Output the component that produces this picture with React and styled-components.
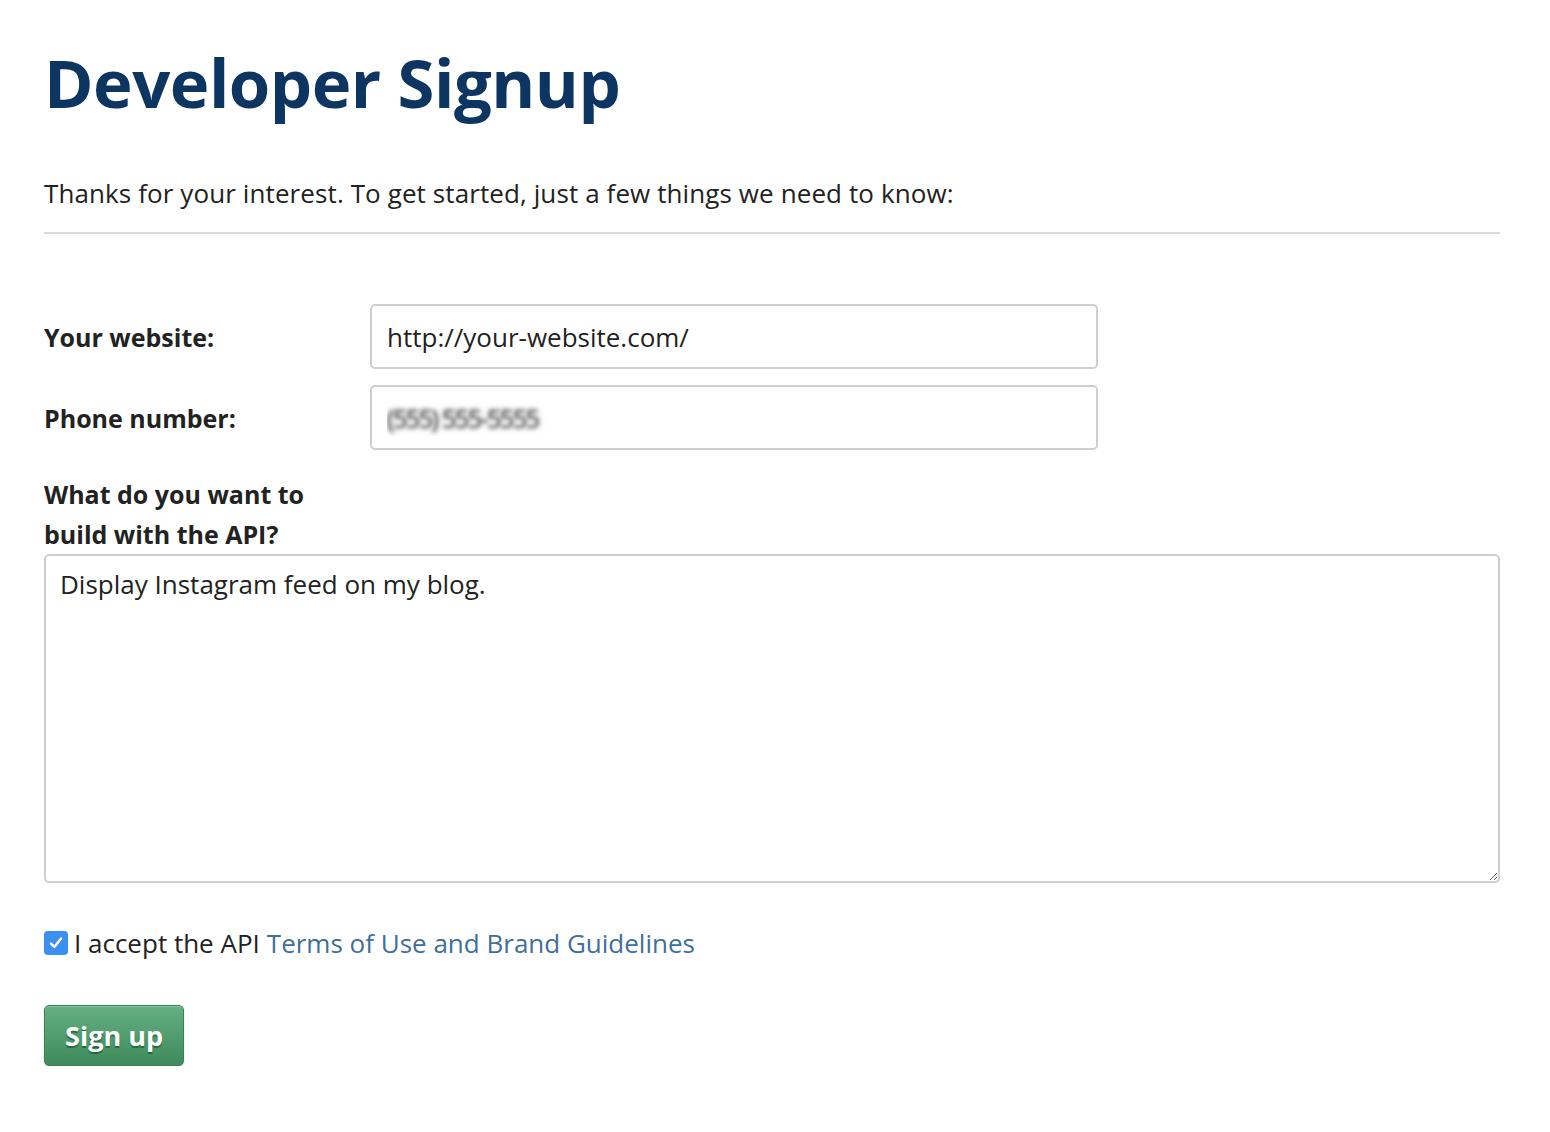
import React from "react";
import styled, { createGlobalStyle } from "styled-components";

const GlobalStyle = createGlobalStyle`
  body {
    margin: 0;
    background: #fff;
    font-family: "Open Sans", "Lato", sans-serif;
    color: #222;
  }
  * { box-sizing: border-box; }
`;

const Page = styled.div`
  width: 1456px;
  margin-left: 44px;
  padding-top: 40px;
`;

const Title = styled.h1`
  margin: 0;
  font-weight: 700;
  font-size: 67px;
  line-height: 84px;
  letter-spacing: -0.5px;
  color: #0c3661;
`;

const Intro = styled.p`
  margin: 53px 0 0;
  font-size: 26px;
  line-height: 32px;
  letter-spacing: 0.1px;
  color: #222;
`;

const Rule = styled.hr`
  margin: 23px 0 0;
  border: none;
  border-top: 2px solid #dcdcdc;
`;

const Form = styled.form`
  margin-top: 70px;
  display: flex;
  flex-direction: column;
`;

const Row = styled.div`
  display: flex;
  align-items: center;
  margin-bottom: 16px;
`;

const Label = styled.label`
  width: 326px;
  font-size: 25px;
  line-height: 40px;
  font-weight: 700;
  color: #222;
`;

const TextInput = styled.input`
  width: 728px;
  height: 65px;
  padding: 0 15px;
  border: 2px solid #cfcfcf;
  border-radius: 5px;
  font-family: inherit;
  font-size: 26px;
  color: #222;
  outline: none;
  ${(p) =>
    p.$hidden &&
    `
    color: transparent;
    text-shadow: 0 0 4px #3a3a3a, 0 0 8px #bbb;
    letter-spacing: -2px;
  `}
`;

const AreaLabel = styled(Label)`
  display: block;
  margin-top: 8px;
  width: 290px;
`;

const TextArea = styled.textarea`
  width: 100%;
  height: 329px;
  padding: 12px 14px;
  border: 2px solid #cfcfcf;
  border-radius: 5px;
  font-family: inherit;
  font-size: 26px;
  line-height: 32px;
  color: #222;
  resize: vertical;
  outline: none;
`;

const Accept = styled.label`
  display: flex;
  align-items: center;
  gap: 6px;
  margin-top: 44px;
  font-size: 26px;
  line-height: 32px;
  color: #222;
`;

const Check = styled.span`
  width: 24px;
  height: 24px;
  border-radius: 4px;
  background: #3a8ff0;
  display: flex;
  align-items: center;
  justify-content: center;
`;

const Link = styled.a`
  color: #3f6f9b;
  text-decoration: none;
  margin-left: 7px;
`;

const Button = styled.button`
  margin-top: 46px;
  width: 140px;
  height: 61px;
  border: 1px solid #3d7f55;
  border-radius: 5px;
  background: linear-gradient(#65b083, #3f8a5a);
  box-shadow: inset 0 1px 0 rgba(255, 255, 255, 0.25), 0 1px 2px rgba(0, 0, 0, 0.2);
  color: #fff;
  font-family: inherit;
  font-weight: 700;
  font-size: 27px;
  text-shadow: 0 2px 1px rgba(0, 60, 20, 0.5);
  cursor: pointer;
  align-self: flex-start;
`;

const App = () => {
  return (
    <Page>
      <GlobalStyle />
      <Title>Developer Signup</Title>
      <Intro>
        Thanks for your interest. To get started, just a few things we need to know:
      </Intro>
      <Rule />
      <Form onSubmit={(e) => e.preventDefault()}>
        <Row>
          <Label>Your website:</Label>
          <TextInput defaultValue="http://your-website.com/" />
        </Row>
        <Row>
          <Label>Phone number:</Label>
          <TextInput $hidden defaultValue="(555) 555-5555" />
        </Row>
        <AreaLabel>What do you want to build with the API?</AreaLabel>
        <TextArea defaultValue="Display Instagram feed on my blog." />
        <Accept>
          <Check>
            <svg width="18" height="18" viewBox="0 0 16 16">
              <path d="M3.5 8.5 L6.5 11.5 L12.5 4" fill="none" stroke="#fff" strokeWidth="2.2" strokeLinecap="round" strokeLinejoin="round" />
            </svg>
          </Check>
          <span>
            I accept the API
            <Link href="#">Terms of Use and Brand Guidelines</Link>
          </span>
        </Accept>
        <Button type="submit">Sign up</Button>
      </Form>
    </Page>
  );
};

export default App;
